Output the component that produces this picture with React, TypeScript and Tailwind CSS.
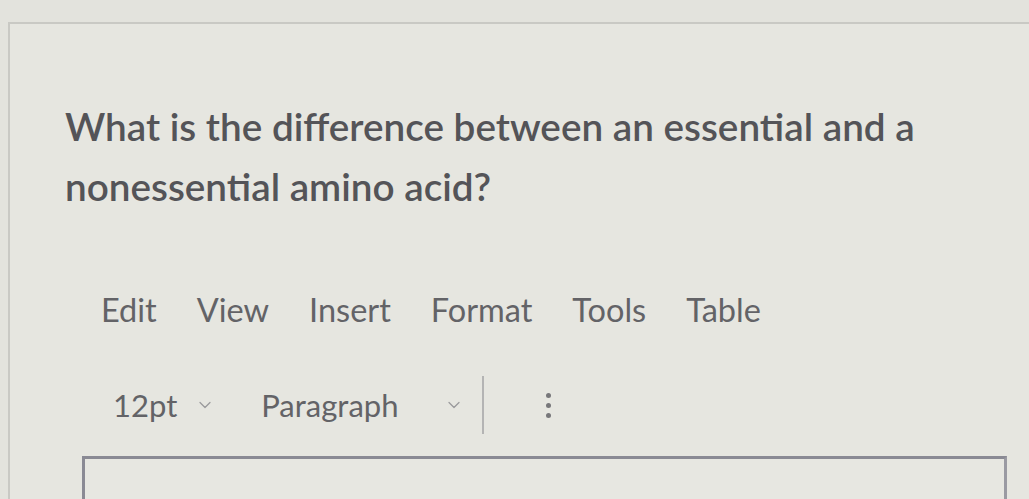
import { ChevronDown } from "lucide-react";

const menus = ["Edit", "View", "Insert", "Format", "Tools", "Table"];

export default function App() {
  return (
    <div
      className="w-[1029px] h-[499px] overflow-hidden bg-[#e3e3dd] text-[#58585c]"
      style={{ fontFamily: "Lato, 'Open Sans', sans-serif" }}
    >
      <div className="ml-[8px] mt-[22px] h-full border-t-2 border-l-2 border-[#c9c9c4] bg-[#e6e6e0]">
        <div className="pl-[55px] pt-[72px] pr-[40px]">
          <p className="text-[38.7px] leading-[60px] font-semibold text-[#545458]">
            What is the difference between an essential and a nonessential amino acid?
          </p>
        </div>

        {/* editor menubar */}
        <div className="mt-[74px] ml-[91px] flex items-center gap-[40px] text-[32.5px] leading-[40px] text-[#636367]">
          {menus.map((m) => (
            <span key={m}>{m}</span>
          ))}
        </div>

        {/* editor toolbar */}
        <div className="mt-[46px] ml-[103px] flex items-center text-[31px] leading-[40px] text-[#636367]">
          <span>12pt</span>
          <ChevronDown className="ml-[18px] w-[20px] h-[20px] text-[#9a9a9c]" strokeWidth={1.5} />
          <span className="ml-[46px]">Paragraph</span>
          <ChevronDown className="ml-[46px] w-[20px] h-[20px] text-[#9a9a9c]" strokeWidth={1.5} />
          <div className="ml-[18px] w-[2px] h-[58px] bg-[#b4b4b4]" />
          <div className="ml-[62px] flex flex-col gap-[5px]">
            <span className="block w-[5px] h-[5px] rounded-full bg-[#77777a]" />
            <span className="block w-[5px] h-[5px] rounded-full bg-[#77777a]" />
            <span className="block w-[5px] h-[5px] rounded-full bg-[#77777a]" />
          </div>
        </div>

        {/* editor body */}
        <div className="mt-[22px] ml-[72px] mr-[22px] h-[120px] border-[3px] border-[#8a8a94] border-r-[#9a9aa2] bg-[#e7e7e1]" />
      </div>
    </div>
  );
}
